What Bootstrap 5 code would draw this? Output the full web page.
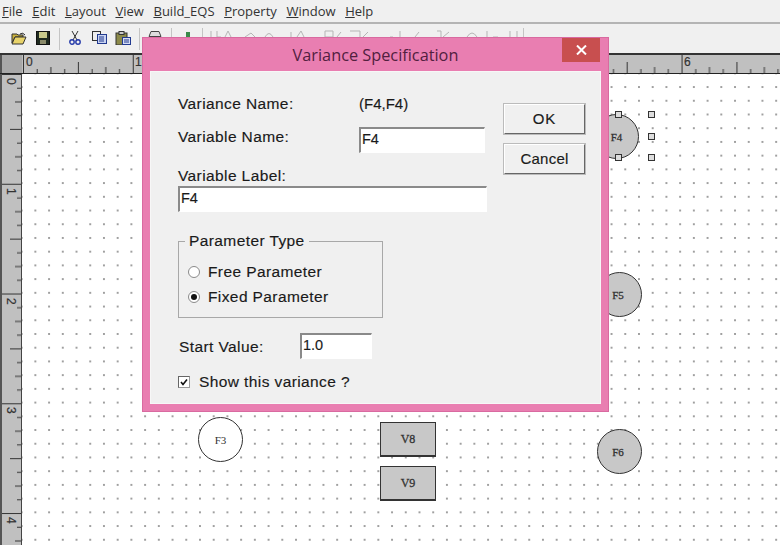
<!DOCTYPE html>
<html lang="en"><head><meta charset="utf-8"><title>Variance Specification</title>
<link href="https://cdn.jsdelivr.net/npm/bootstrap@5.3.0/dist/css/bootstrap.min.css" rel="stylesheet">
<style>
html,body{height:545px;overflow:hidden}
body{position:relative;width:780px;background:#f0f0f0;font-family:"Liberation Sans",Arial,sans-serif;color:#1a1a1a}
.menu-strip{padding-left:2px;gap:9.6px;font:13px/21px "Open Sans",sans-serif;color:#333;border-bottom:2px solid #b4b4b4;box-sizing:content-box;height:22px}
.menu-strip u{text-decoration-thickness:1px}
.tool-strip{height:29px;position:relative}
.tool-icon{display:block;position:absolute;top:7px}
.tool-sep{position:absolute;top:4px;width:1px;height:22px;background:#c4c4c4}
.ghost-row{position:absolute;left:205px;top:5px}
.ruler-row{height:21px;background:#c0c0c0;border-top:2px solid #333;border-bottom:1px solid #222;position:relative}
.ruler-corner{width:22px;height:100%;background:#a8a8a8;border-left:2px solid #555}
.work-area{height:471px}
.side-ruler{width:22px;background:#c0c0c0;border-left:2px solid #555;border-right:1px solid #444;flex:none}
.sheet{position:relative;flex:1;background-color:#fff;background-image:radial-gradient(circle at center,#8c8c8c 0,#a0a0a0 .7px,transparent 1.1px);background-size:13.72px 13.72px;background-position:6.5px 6.2px}
.node{position:absolute;display:flex;align-items:center;justify-content:center;font:11px "Liberation Serif",serif;-webkit-text-stroke:.3px #333;color:#333;border:1px solid #333}
.node-round{width:45px;height:45px;border-radius:50%;background:#c8c8c8}
.node-box{width:56px;height:35px;background:#c8c8c8;border-width:1px 1px 2px 1px;align-items:flex-start;padding-top:9px;font-size:12px}
.node-white{background:#fff;-webkit-text-stroke:0}
.node-shift{padding-right:3px}
.grip{position:absolute;width:7px;height:7px;background:#ddd;border:1px solid #333}
.dlg{position:absolute;left:142px;top:37px;width:467px;height:375px;background:#e97eb1;border:1px solid #d96aa0;padding:33px 7px 7px 7px}
.dlg-title{position:absolute;left:0;right:0;top:6px;text-align:center;font:16.3px/22px "Open Sans",sans-serif;color:#52203f}
.dlg-close{position:absolute;right:8px;top:0;width:38px;height:24px;background:#c84f4f;color:#fff;border:0;padding:0;display:flex;align-items:center;justify-content:center}
.dlg-body{background:#f0f0f0;height:100%;padding:0 15px 0 27px;border:1px solid #f7f7f7;display:flex;gap:16px;font-size:15.5px;letter-spacing:.4px;-webkit-text-stroke:.15px #1a1a1a}
.left-pane{width:309px;flex:none}
.line-a{height:18px;line-height:18px;margin-top:23px}
.line-b{margin-top:14px;height:26px}
.tag-a{width:181px;flex:none}
.tag-up{position:relative;top:-2px}
.pair-val{letter-spacing:0;font-size:15px}
.sunk{height:26px;border:1px solid #fff;border-top:2px solid #8a8a8a;border-left:2px solid #8a8a8a;background:#fff;padding:0 0 4px 1px;font:14.5px/18px "Liberation Sans",sans-serif;color:#1a1a1a;border-radius:0;outline:0;-webkit-text-stroke:.15px #1a1a1a}
.sunk-name{width:126px}.sunk-full{width:309px;display:block}.sunk-start{width:72px}
.tag-b{height:18px;line-height:18px;margin-top:14px;margin-bottom:1px}
.param-box{width:205px;height:77px;margin-top:29px;border:1px solid #a8a8a8;position:relative;padding:17px 0 0 9px}
.param-box legend{position:absolute;left:6px;top:-10px;width:auto;float:none;margin:0;padding:0 4px;background:#f0f0f0;font-size:15.5px;line-height:18px;letter-spacing:.4px}
.opt-line{height:25px;gap:8px}
.opt-dot{width:12px;height:12px;border-radius:50%;background:#fff;border:1px solid #8a8a8a;flex:none;position:relative;margin-left:0}
.opt-dot.on::after{content:"";position:absolute;left:2px;top:2px;width:6px;height:6px;border-radius:50%;background:#111}
.start-line{margin-top:15px;height:26px;padding-left:1px}
.tag-c{width:121px;flex:none;position:relative;top:1px}
.show-line{margin-top:14px;gap:9px;height:18px;line-height:18px}
.tick-box{width:12px;height:12px;background:#fff;border:1px solid #999;border-left-color:#666;border-top-color:#666;flex:none;display:flex}
.right-pane{width:83px;flex:none;padding-top:31px}
.push{display:block;width:83px;height:32px;background:#f0f0f0;border-style:solid;border-color:#fff #666 #666 #fff;outline:1px solid #bbb;outline-offset:-1px;border-width:2px;border-radius:0;padding:0 0 2px;font:15px "Liberation Sans",sans-serif;color:#1a1a1a;letter-spacing:.25px;-webkit-text-stroke:.15px #1a1a1a}
.push-ok{letter-spacing:1px;margin-bottom:8px}
</style></head>
<body>
<nav class="menu-strip d-flex align-items-center">
<span><u>F</u>ile</span><span><u>E</u>dit</span><span><u>L</u>ayout</span><span><u>V</u>iew</span><span><u>B</u>uild_EQS</span><span><u>P</u>roperty</span><span><u>W</u>indow</span><span><u>H</u>elp</span>
</nav>
<div class="tool-strip">
<svg class="tool-icon" style="left:11px" width="16" height="14" viewBox="0 0 16 14"><path d="M1 3h5l1 1h5v2H4L1 12z" fill="#c9b13c" stroke="#333"/><path d="M1 13l3-7h11l-3 7z" fill="#e8d36a" stroke="#333"/><path d="M9 3q3-2 5 1" fill="none" stroke="#222"/></svg>
<svg class="tool-icon" style="left:36px" width="14" height="14" viewBox="0 0 14 14"><rect x=".5" y=".5" width="13" height="13" fill="#1f2a20" stroke="#111"/><rect x="3" y="1" width="8" height="6" fill="#c8c88a"/><rect x="4" y="9" width="6" height="4" fill="#8a8a6a"/></svg>
<span class="tool-sep" style="left:59px"></span>
<svg class="tool-icon" style="left:69px" width="12" height="14" viewBox="0 0 12 14"><path d="M3 0l5 9M9 0L4 9" stroke="#333" fill="none"/><circle cx="3" cy="11" r="2.2" fill="none" stroke="#2338a8" stroke-width="1.4"/><circle cx="9" cy="11" r="2.2" fill="none" stroke="#2338a8" stroke-width="1.4"/></svg>
<svg class="tool-icon" style="left:92px" width="15" height="13" viewBox="0 0 15 13"><rect x=".5" y=".5" width="8" height="9" fill="#eee" stroke="#333"/><rect x="5.5" y="3.5" width="9" height="9" fill="#c9d3f0" stroke="#223a90"/><path d="M7 6h5M7 8h5M7 10h5" stroke="#223a90"/></svg>
<svg class="tool-icon" style="left:115px" width="16" height="14" viewBox="0 0 16 14"><rect x="1" y="2" width="11" height="12" fill="#8c8a4a" stroke="#333"/><rect x="4" y=".5" width="5" height="3" fill="#ccc" stroke="#333"/><rect x="7.5" y="6.5" width="8" height="7" fill="#d5dcf3" stroke="#223a90"/><path d="M9 9h5M9 11h5" stroke="#223a90"/></svg>
<span class="tool-sep" style="left:139px"></span>
<svg class="tool-icon" style="left:148px" width="14" height="8" viewBox="0 0 14 8"><path d="M3 .5h8l2 5H1z" fill="#ddd" stroke="#444"/><path d="M1 7h12" stroke="#555"/></svg>
<span class="tool-sep" style="left:171px"></span>
<svg class="tool-icon" style="left:185px;top:8px" width="6" height="6" viewBox="0 0 6 6"><rect x="1" y="0" width="4" height="6" fill="#3a8a4a"/></svg>
<span class="tool-sep" style="left:202px"></span>
<svg class="ghost-row" width="320" height="8" viewBox="0 0 320 8"><g fill="none" stroke="#b5b5b5"><path d="M6 2v6M12 2v6h4M20 8l3-6 3 6M40 8l6-4 4 4M60 8q4-7 8 0M86 8v-5M92 8l4-6 3 6M120 2h8v6h-8zM132 8l4-5M145 2h10v6M158 8l5-5M185 8h3M195 2v6M210 8l4-5M232 2h4v6M238 8l6-5M262 8q5-8 10 0M282 2v6M288 8h5M305 2v6M312 8v-6"/></g></svg>
<span class="tool-sep" style="left:523px"></span>
</div>
<div class="ruler-row d-flex">
<div class="ruler-corner"></div>
<svg width="758" height="18" viewBox="0 0 758 18" class="d-block flex-none">
<defs><pattern id="hticks" width="109.76" height="18" patternUnits="userSpaceOnUse" x="1"><path d="M.5 0v18M14.2 14v4M27.9 12v6M41.7 14v4M55.4 7v11M69.1 14v4M82.8 12v6M96.5 14v4" stroke="#333" fill="none"/></pattern></defs>
<rect width="758" height="18" fill="url(#hticks)"/>
<g font-family="Liberation Sans,sans-serif" font-size="12" fill="#333" stroke="#333" stroke-width=".2"><text x="4" y="11">0</text><text x="113" y="11">1</text><text x="662" y="11">6</text></g>
</svg>
</div>
<div class="work-area d-flex">
<aside class="side-ruler">
<svg width="19" height="471" viewBox="0 0 19 471" class="d-block">
<defs><pattern id="vticks" width="19" height="109.76" patternUnits="userSpaceOnUse"><path d="M0 .5h19M15 14.2h4M13 27.9h6M15 41.7h4M8 55.4h11M15 69.1h4M13 82.8h6M15 96.5h4" stroke="#333" fill="none"/></pattern></defs>
<rect width="19" height="471" fill="url(#vticks)"/>
<g font-family="Liberation Sans,sans-serif" font-size="12" fill="#333" stroke="#333" stroke-width=".2"><text transform="translate(5 4) rotate(90)">0</text><text transform="translate(5 114) rotate(90)">1</text><text transform="translate(5 224) rotate(90)">2</text><text transform="translate(5 333) rotate(90)">3</text><text transform="translate(5 443) rotate(90)">4</text></g>
</svg>
</aside>
<main class="sheet">
<div class="node node-round" style="left:572px;top:40px">F4</div>
<span class="grip" style="left:593px;top:37px"></span><span class="grip" style="left:626px;top:37px"></span><span class="grip" style="left:626px;top:59px"></span><span class="grip" style="left:593px;top:80px"></span><span class="grip" style="left:626px;top:80px"></span>
<div class="node node-round node-shift" style="left:575px;top:198px">F5</div>
<div class="node node-round node-white" style="left:176px;top:343px">F3</div>
<div class="node node-round node-shift" style="left:575px;top:355px">F6</div>
<div class="node node-box" style="left:358px;top:302px"></div>
<div class="node node-box" style="left:358px;top:348px">V8</div>
<div class="node node-box" style="left:358px;top:392px">V9</div>
</main>
</div>
<section class="dlg" role="dialog">
<div class="dlg-title">Variance Specification</div>
<button class="dlg-close" type="button" aria-label="Close"><svg width="11" height="10" viewBox="0 0 11 10"><path d="M1 .5l9 9M10 .5l-9 9" stroke="#fff" stroke-width="2"/></svg></button>
<div class="dlg-body">
<div class="left-pane">
<div class="line-a d-flex"><span class="tag-a">Variance Name:</span><span class="pair-val">(F4,F4)</span></div>
<div class="line-b d-flex align-items-start"><span class="tag-a tag-up">Variable Name:</span><input class="sunk sunk-name" value="F4"></div>
<div class="tag-b">Variable Label:</div>
<input class="sunk sunk-full" value="F4">
<fieldset class="param-box"><legend>Parameter Type</legend>
<div class="opt-line d-flex align-items-center"><span class="opt-dot"></span><span>Free Parameter</span></div>
<div class="opt-line d-flex align-items-center"><span class="opt-dot on"></span><span>Fixed Parameter</span></div>
</fieldset>
<div class="start-line d-flex align-items-center"><span class="tag-c">Start Value:</span><input class="sunk sunk-start" value="1.0"></div>
<div class="show-line d-flex align-items-center"><span class="tick-box"><svg width="10" height="10" viewBox="0 0 10 10"><path d="M2 5l2 2.5L8 2.5" fill="none" stroke="#111" stroke-width="1.6"/></svg></span><span>Show this variance ?</span></div>
</div>
<div class="right-pane"><button class="push push-ok" type="button">OK</button><button class="push" type="button">Cancel</button></div>
</div>
</section>
<script src="https://cdn.jsdelivr.net/npm/bootstrap@5.3.0/dist/js/bootstrap.bundle.min.js"></script>
</body></html>
